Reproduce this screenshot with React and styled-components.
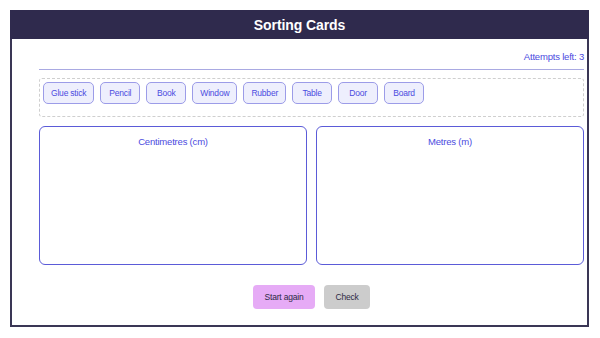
import React from 'react'
import styled, { createGlobalStyle } from 'styled-components'

const GlobalStyle = createGlobalStyle`
  body {
    margin: 0;
    background: #ffffff;
    font-family: "Liberation Sans", Arial, sans-serif;
  }
`

const Page = styled.div`
  padding: 10px 11px 0 10px;
`

const Header = styled.header`
  height: 29px;
  background: #2f2a4d;
  color: #ffffff;
  font-size: 14px;
  font-weight: bold;
  display: flex;
  align-items: center;
  justify-content: center;
  letter-spacing: -0.1px;
`

const Body = styled.div`
  border: 2px solid #3a3655;
  border-top: none;
  padding: 0 3px 16px 27px;
`

const Attempts = styled.div`
  text-align: right;
  font-size: 9.5px;
  line-height: 12px;
  color: #4b4be0;
  letter-spacing: -0.2px;
  padding: 12px 0 6px;
  border-bottom: 1px solid #a9a9e2;
`

const Pool = styled.div`
  margin-top: 8px;
  border: 1px dashed #cfcfcf;
  border-radius: 3px;
  padding: 3px 3px 12px;
  display: flex;
  gap: 6px;
`

const Card = styled.div`
  height: 22px;
  min-width: 40px;
  box-sizing: border-box;
  padding: 0 7px;
  display: flex;
  align-items: center;
  justify-content: center;
  border: 1px solid #9c9ce8;
  background: #eeeffd;
  border-radius: 5px;
  font-size: 8.5px;
  color: #4b4be0;
  letter-spacing: -0.2px;
`

const Bins = styled.div`
  margin-top: 9px;
  display: grid;
  grid-template-columns: 1fr 1fr;
  gap: 9px;
`

const Bin = styled.div`
  height: 139px;
  box-sizing: border-box;
  border: 1px solid #5b5bd8;
  border-radius: 6px;
  padding-top: 9px;
  text-align: center;
  font-size: 9.5px;
  color: #4b4be0;
  letter-spacing: -0.2px;
`

const Actions = styled.div`
  margin-top: 20px;
  display: flex;
  justify-content: center;
  gap: 9px;
`

const Button = styled.button`
  height: 24px;
  width: ${p => p.$w}px;
  border: none;
  border-radius: 4px;
  background: ${p => p.$bg};
  color: #2c2a44;
  font-family: "Liberation Sans", Arial, sans-serif;
  font-size: 8.5px;
  letter-spacing: -0.2px;
  padding: 0;
`

const cards = ['Glue stick', 'Pencil', 'Book', 'Window', 'Rubber', 'Table', 'Door', 'Board']

export default function App () {
  return (
    <Page>
      <GlobalStyle />
      <Header>Sorting Cards</Header>
      <Body>
        <Attempts>Attempts left: 3</Attempts>
        <Pool>
          {cards.map(c => <Card key={c}>{c}</Card>)}
        </Pool>
        <Bins>
          <Bin>Centimetres (cm)</Bin>
          <Bin>Metres (m)</Bin>
        </Bins>
        <Actions>
          <Button $bg='#e6abf6' $w={62}>Start again</Button>
          <Button $bg='#cccccc' $w={46}>Check</Button>
        </Actions>
      </Body>
    </Page>
  )
}
